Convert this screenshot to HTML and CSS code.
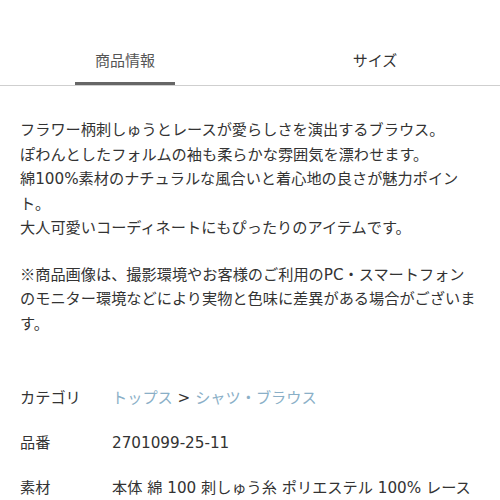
FILE: index.html
```html
<!DOCTYPE html>
<html lang="ja">
<head>
<meta charset="utf-8">
<title>商品情報</title>
<link rel="stylesheet" href="styles.css">
</head>
<body>
<div class="tabs">
  <div class="tab active">商品情報</div>
  <div class="tab">サイズ</div>
</div>
<div class="content">
  <p class="desc">フラワー柄刺しゅうとレースが愛らしさを演出するブラウス。<br>ぽわんとしたフォルムの袖も柔らかな雰囲気を漂わせます。<br>綿100%素材のナチュラルな風合いと着心地の良さが魅力ポイン<br>ト。<br>大人可愛いコーディネートにもぴったりのアイテムです。</p>
  <p class="desc note"><span class="cjk">※</span>商品画像は、撮影環境やお客様のご利用のPC・スマートフォン<br>のモニター環境などにより実物と色味に差異がある場合がございます。</p>
  <dl class="info">
    <div class="row"><dt>カテゴリ</dt><dd><span class="link">トップス</span> &gt; <span class="link">シャツ・ブラウス</span></dd></div>
    <div class="row"><dt>品番</dt><dd>2701099-25-11</dd></div>
    <div class="row"><dt>素材</dt><dd>本体 綿 100 刺しゅう糸 ポリエステル 100% レース</dd></div>
  </dl>
</div>
</body>
</html>
```
FILE: styles.css
```css
html, body {
  margin: 0;
  padding: 0;
  background: #fff;
}
body {
  font-family: "DejaVu Sans", "Noto Sans CJK JP", sans-serif;
  font-size: 15.2px;
  color: #333;
  width: 500px;
  overflow: hidden;
}
.cjk {
  font-family: "Noto Sans CJK JP", sans-serif;
}
.tabs {
  display: flex;
  height: 85px;
  border-bottom: 1px solid #cfcfcf;
}
.tab {
  position: relative;
  flex: 1;
  display: flex;
  align-items: flex-end;
  justify-content: center;
  padding-bottom: 15px;
  box-sizing: border-box;
  font-family: "Noto Sans CJK JP", sans-serif;
  font-size: 15px;
  line-height: 20px;
  color: #333;
}
.tab.active {
  color: #555;
}
.tab.active::after {
  content: "";
  position: absolute;
  left: 75px;
  width: 100px;
  bottom: 0;
  height: 3px;
  background: #666;
}
.content {
  padding: 0 20px;
}
.desc {
  margin: 32px 0 0;
  line-height: 24.5px;
}
.desc.note {
  margin-top: 20px;
}
.info {
  margin: 40px 0 0;
}
.row {
  display: grid;
  grid-template-columns: 92px 1fr;
  padding: 10px 0;
  line-height: 25px;
}
.row dt, .row dd {
  margin: 0;
  white-space: nowrap;
}
.link {
  color: #8aafc7;
}
```
